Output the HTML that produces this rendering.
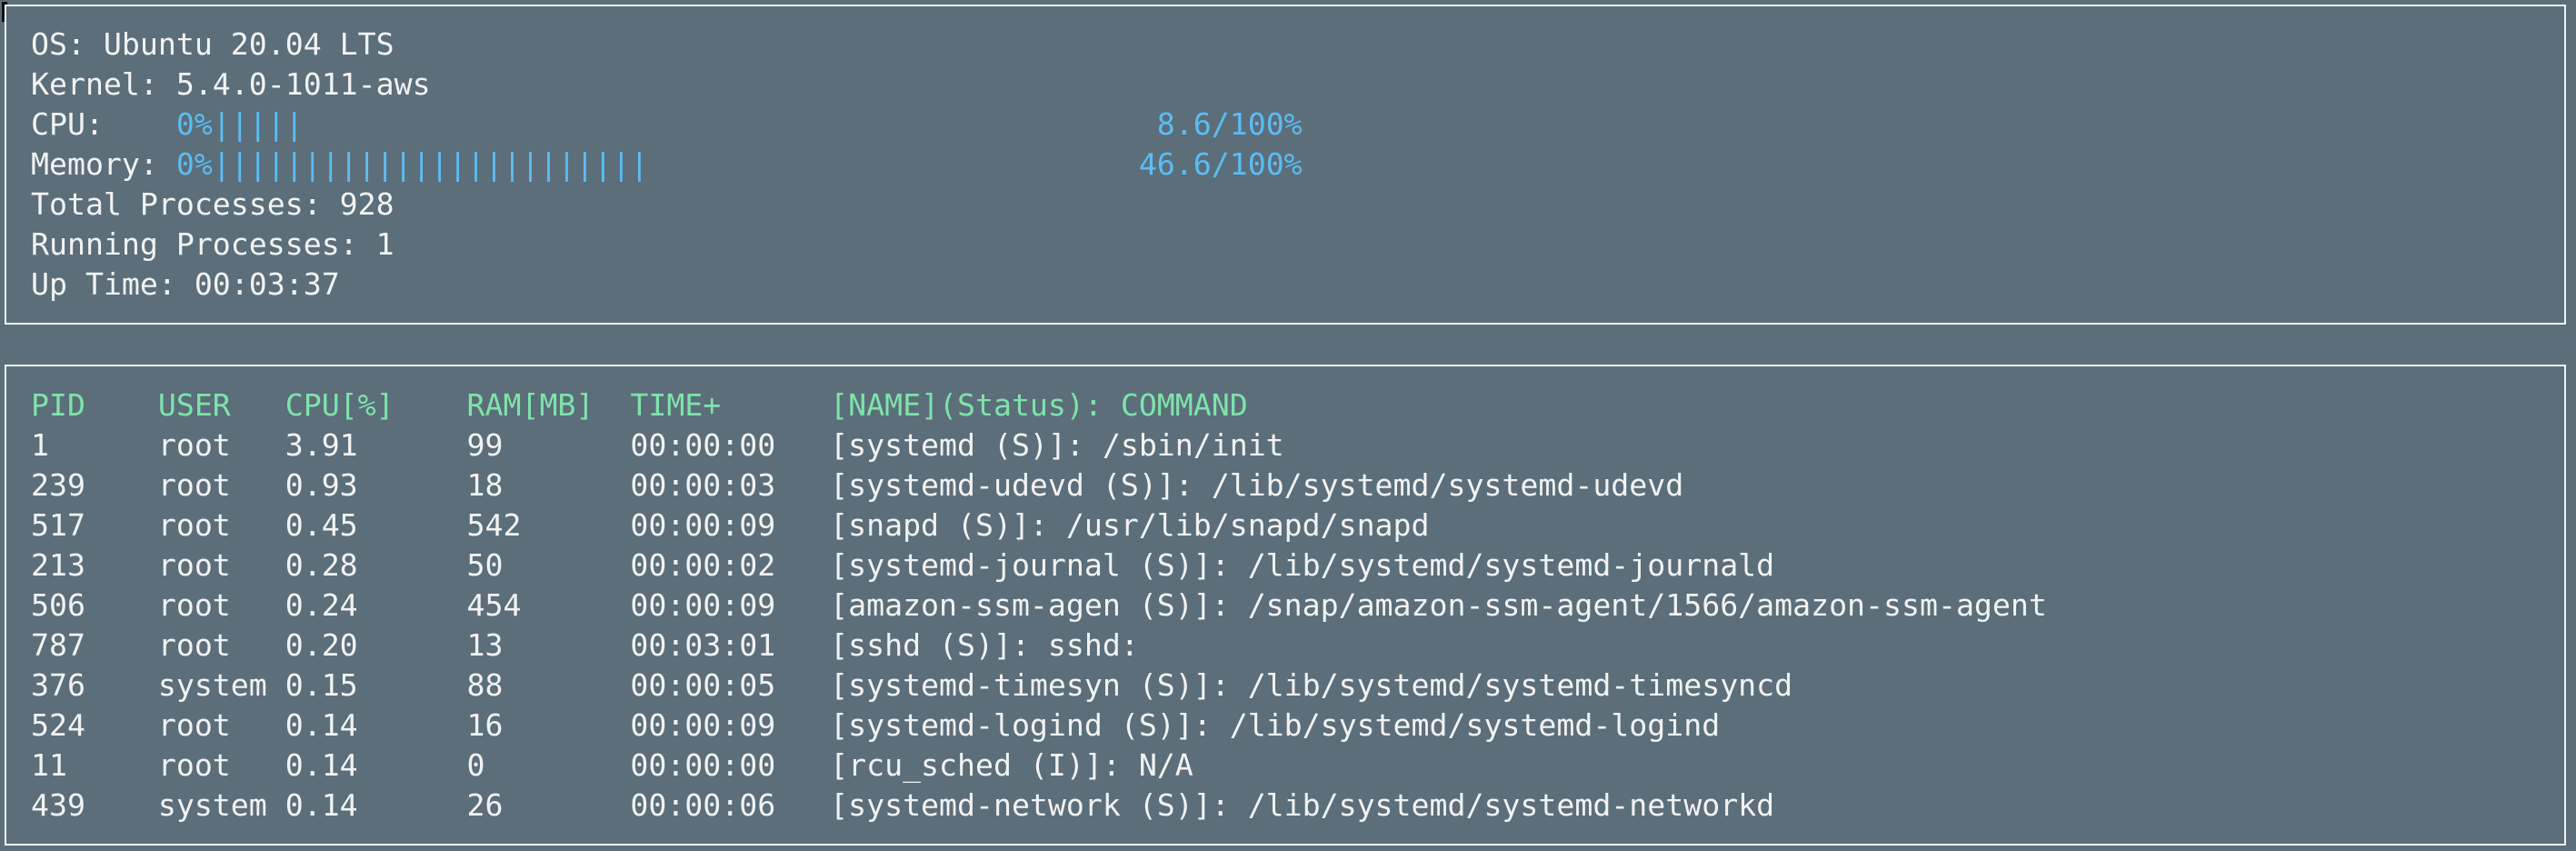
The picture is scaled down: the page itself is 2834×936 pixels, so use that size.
<!DOCTYPE html>
<html><head><meta charset="utf-8"><style>
html,body{margin:0;padding:0;}
body{width:2834px;height:936px;background:#5b6e7a;position:relative;overflow:hidden;font-family:"DejaVu Sans Mono","Liberation Mono",monospace;font-size:33.2px;color:#f2f2f2;}
.box{position:absolute;border:2px solid #f4f4f4;box-sizing:border-box;}
pre{margin:0;font:inherit;line-height:44px;white-space:pre;position:absolute;left:34px;}
.b{color:#5bbdf4}.g{color:#7fe3aa}
.cur{position:absolute;left:2px;top:2px;width:6px;height:22px;border-left:3px solid #111;border-top:3px solid #111;box-sizing:border-box;}
</style></head><body>
<div class="box" style="left:5px;top:5px;width:2818px;height:352px"></div>
<div class="cur"></div>
<pre style="top:27px">OS: Ubuntu 20.04 LTS
Kernel: 5.4.0-1011-aws
CPU:    <span class="b">0%|||||                                               8.6/100%</span>
Memory: <span class="b">0%||||||||||||||||||||||||                           46.6/100%</span>
Total Processes: 928
Running Processes: 1
Up Time: 00:03:37</pre>
<div class="box" style="left:5px;top:401px;width:2818px;height:529px"></div>
<pre style="top:424px"><span class="g">PID    USER   CPU[%]    RAM[MB]  TIME+      [NAME](Status): COMMAND</span>
1      root   3.91      99       00:00:00   [systemd (S)]: /sbin/init
239    root   0.93      18       00:00:03   [systemd-udevd (S)]: /lib/systemd/systemd-udevd
517    root   0.45      542      00:00:09   [snapd (S)]: /usr/lib/snapd/snapd
213    root   0.28      50       00:00:02   [systemd-journal (S)]: /lib/systemd/systemd-journald
506    root   0.24      454      00:00:09   [amazon-ssm-agen (S)]: /snap/amazon-ssm-agent/1566/amazon-ssm-agent
787    root   0.20      13       00:03:01   [sshd (S)]: sshd:
376    system 0.15      88       00:00:05   [systemd-timesyn (S)]: /lib/systemd/systemd-timesyncd
524    root   0.14      16       00:00:09   [systemd-logind (S)]: /lib/systemd/systemd-logind
11     root   0.14      0        00:00:00   [rcu_sched (I)]: N/A
439    system 0.14      26       00:00:06   [systemd-network (S)]: /lib/systemd/systemd-networkd</pre>
</body></html>
